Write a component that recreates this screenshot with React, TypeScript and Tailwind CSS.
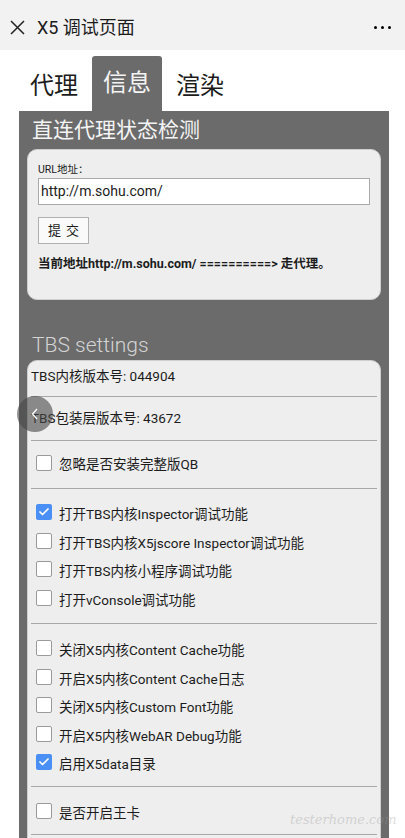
import { Check } from "lucide-react";

const FONT = { fontFamily: "Roboto, 'Noto Sans CJK SC', sans-serif" };

type Opt = { label: string; checked?: boolean };

const GROUPS: Opt[][] = [
  [
    { label: "打开TBS内核Inspector调试功能", checked: true },
    { label: "打开TBS内核X5jscore Inspector调试功能" },
    { label: "打开TBS内核小程序调试功能" },
    { label: "打开vConsole调试功能" },
  ],
  [
    { label: "关闭X5内核Content Cache功能" },
    { label: "开启X5内核Content Cache日志" },
    { label: "关闭X5内核Custom Font功能" },
    { label: "开启X5内核WebAR Debug功能" },
    { label: "启用X5data目录", checked: true },
  ],
];

function Box({ checked }: { checked?: boolean }) {
  return checked ? (
    <div className="flex h-[16px] w-[16px] shrink-0 -translate-y-[2px] items-center justify-center rounded-[2px] bg-[#4a8ff5]">
      <Check size={12} strokeWidth={3.5} className="text-white" />
    </div>
  ) : (
    <div className="h-[16px] w-[16px] shrink-0 -translate-y-[2px] rounded-[2px] border border-[#9a9a9a] bg-white" />
  );
}

function Row({ label, checked }: Opt) {
  return (
    <div className="flex h-[28.5px] items-center gap-[7px] pl-[5px]">
      <Box checked={checked} />
      <span>{label}</span>
    </div>
  );
}

const Hr = () => <div className="h-px bg-[#a8a8a8]" />;

export default function App() {
  return (
    <div className="relative h-[838px] w-[405px] overflow-hidden bg-white text-[#1c1c1c]" style={FONT}>
      <div className="flex h-[50px] items-center bg-[#f2f2f2] px-[10px] pt-[5px]">
        <svg width="15" height="15" viewBox="0 0 15 15">
          <path d="M1 1L14 14M14 1L1 14" stroke="#222" strokeWidth="1.5" />
        </svg>
        <span className="ml-[12px] text-[18px]">X5 调试页面</span>
        <div className="ml-auto mr-[4px] flex gap-[3.5px]">
          <span className="h-[3.5px] w-[3.5px] rounded-full bg-black" />
          <span className="h-[3.5px] w-[3.5px] rounded-full bg-black" />
          <span className="h-[3.5px] w-[3.5px] rounded-full bg-black" />
        </div>
      </div>

      <div className="ml-[19px] mt-[6px] flex h-[55px] gap-[3px] text-[24px]">
        <div className="px-[11px] pt-[15px] leading-[30px]">代理</div>
        <div className="rounded-t-[3px] bg-[#6b6b6b] px-[11px] pt-[12px] leading-[30px] text-[#f4f4f4]">信息</div>
        <div className="px-[11px] pt-[15px] leading-[30px]">渲染</div>
      </div>

      <div className="ml-[19px] w-[370px] bg-[#6b6b6b] px-[8px] pb-[40px]">
        <div className="h-[38px] pl-[5px] pt-[6px] text-[21px] leading-[26px] text-[#f4f4f4]">直连代理状态检测</div>
        <div className="h-[151px] rounded-[10px] border border-[#cfcfcf] bg-[#eeeeee] px-[10px] pt-[13px]">
          <div className="text-[10.5px] leading-[14px]">URL地址：</div>
          <div className="mt-[1px] flex h-[27px] w-[332px] items-center border border-[#a9a9a9] bg-white px-[2px] text-[14px]">
            http://m.sohu.com/
          </div>
          <div className="mt-[12px] flex h-[27px] w-[51px] items-center justify-center border border-[#b0b0b0] bg-[#fafafa] text-[13px] tracking-[5px]">
            <span className="ml-[5px]">提交</span>
          </div>
          <div className="mt-[11px] text-[12.5px] font-bold leading-[17px]">
            当前地址http://m.sohu.com/ ==========&gt; 走代理。
          </div>
        </div>

        <div className="h-[60px] pl-[5px] pt-[31px] text-[21px] font-light leading-[28px] text-[#d4d4d4]">TBS settings</div>

        <div className="rounded-t-[10px] border border-[#cfcfcf] bg-[#eeeeee] px-[3px] text-[13.5px]">
          <div className="flex h-[35px] items-center pb-[5px]">TBS内核版本号: 044904</div>
          <Hr />
          <div className="flex h-[43px] items-center">TBS包装层版本号: 43672</div>
          <Hr />
          <div className="flex h-[47px] items-center gap-[7px] pl-[5px]">
            <Box />
            <span>忽略是否安装完整版QB</span>
          </div>
          <Hr />
          <div className="pb-[9px] pt-[11px]">
            {GROUPS[0].map((o) => (<Row key={o.label} {...o} />))}
          </div>
          <Hr />
          <div className="pb-[7.5px] pt-[12px]">
            {GROUPS[1].map((o) => (<Row key={o.label} {...o} />))}
          </div>
          <Hr />
          <div className="pb-[6.5px] pt-[12px]">
            <Row label="是否开启王卡" />
          </div>
          <Hr />
          <div className="h-[20px]" />
        </div>
      </div>

      <div className="absolute left-[17px] top-[396px] flex h-[36px] w-[36px] items-center justify-center rounded-full bg-[rgba(70,70,70,0.6)]">
        <svg width="8" height="12" viewBox="0 0 8 12">
          <path d="M6 1L1.5 6L6 11" stroke="#fff" strokeWidth="1.3" fill="none" />
        </svg>
      </div>

      <div className="absolute left-[290px] top-[810px] whitespace-nowrap font-['DejaVu_Serif',serif] text-[13px] italic text-[rgba(150,150,150,0.35)]">
        testerhome.com
      </div>
    </div>
  );
}
